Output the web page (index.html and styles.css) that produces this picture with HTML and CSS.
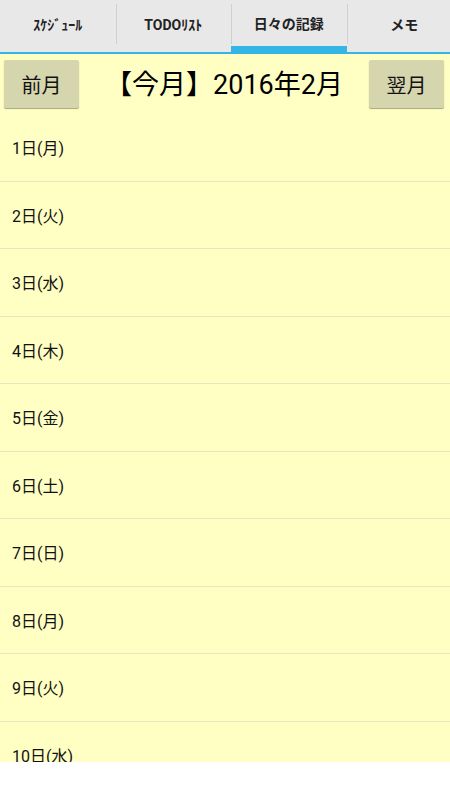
FILE: index.html
```html
<!DOCTYPE html>
<html lang="ja">
<head>
  <meta charset="UTF-8">
  <meta name="viewport" content="width=device-width, initial-scale=1.0">
  <title>日々の記録</title>
  <link rel="stylesheet" href="styles.css">
</head>
<body>
  <div class="screen">
    <div class="tabs">
      <div class="tab">ｽｹｼﾞｭｰﾙ</div>
      <div class="tab">TODOﾘｽﾄ</div>
      <div class="tab active">日々の記録</div>
      <div class="tab">メモ</div>
    </div>

    <div class="month">
      <button class="month-btn">前月</button>
      <div class="month-title">【今月】2016年2月</div>
      <button class="month-btn">翌月</button>
    </div>

    <ul class="days">
      <li>1日(月)</li>
      <li>2日(火)</li>
      <li>3日(水)</li>
      <li>4日(木)</li>
      <li>5日(金)</li>
      <li>6日(土)</li>
      <li>7日(日)</li>
      <li>8日(月)</li>
      <li>9日(火)</li>
      <li>10日(水)</li>
    </ul>

    <div class="bottom"></div>
  </div>
</body>
</html>
```

FILE: styles.css
```css
* {
  box-sizing: border-box;
}
body {
  margin: 0;
  font-family: Roboto, "Noto Sans CJK JP", sans-serif;
  background: #fff;
}
.screen {
  width: 450px;
  height: 800px;
  overflow: hidden;
  display: flex;
  flex-direction: column;
}
.tabs {
  display: flex;
  height: 54px;
  flex: none;
  background: #e8e8e8;
  border-bottom: 2px solid #33b5e5;
  overflow: hidden;
}
.tab {
  position: relative;
  flex: none;
  width: 115.5px;
  display: flex;
  align-items: center;
  justify-content: center;
  padding-bottom: 4px;
  font-size: 14px;
  font-weight: bold;
  color: #222;
}
.tab + .tab::before {
  content: "";
  position: absolute;
  left: 0;
  top: 4px;
  height: 40px;
  border-left: 1px solid #cfcfcf;
}
.tab.active {
  border-bottom: 6px solid #33b5e5;
  padding-bottom: 0;
}
.month {
  display: flex;
  align-items: center;
  justify-content: space-between;
  height: 60px;
  flex: none;
  padding: 0 6px 0 4px;
  background: #ffffc4;
}
.month-btn {
  width: 75px;
  height: 48px;
  border: none;
  border-radius: 2px;
  background: #d6d6ae;
  box-shadow: 0 1px 1px rgba(0,0,0,0.35);
  font-family: inherit;
  font-size: 20px;
  color: #111;
  padding: 0;
}
.month-title {
  font-size: 27px;
  color: #000;
  padding-bottom: 4px;
}
.days {
  list-style: none;
  margin: 0;
  padding: 0;
  flex: 1;
  overflow: hidden;
  background: #ffffc4;
}
.days li {
  height: 67.5px;
  display: flex;
  align-items: center;
  padding-left: 12px;
  border-bottom: 1px solid #e6e6c0;
  font-size: 16px;
  color: #111;
}
.bottom {
  height: 38px;
  flex: none;
  background: #fff;
}
```
